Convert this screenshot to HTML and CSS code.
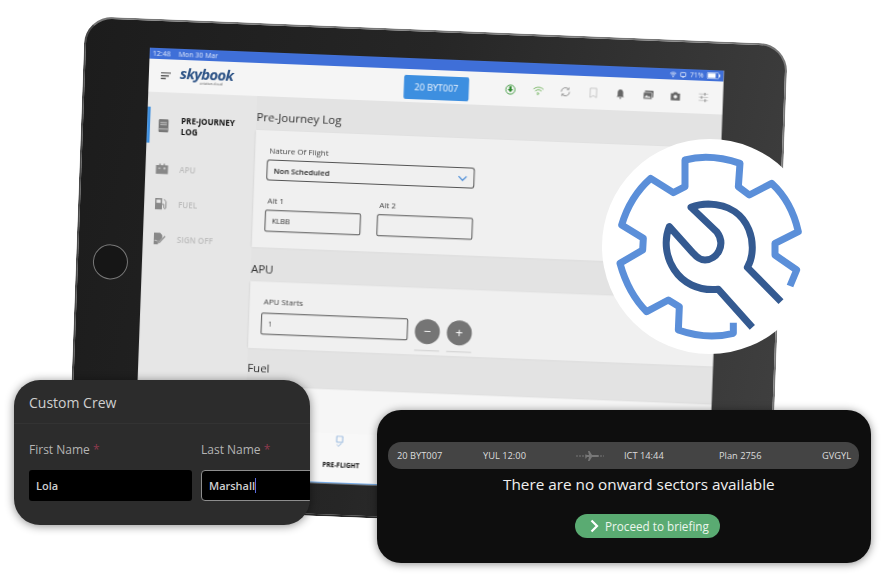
FILE: index.html
```html
<!DOCTYPE html>
<html lang="en">
<head>
<meta charset="utf-8">
<title>Skybook</title>
<link rel="stylesheet" href="styles.css">
</head>
<body>
<main class="stage">
  <section class="tablet">
    <div class="bezel"><span class="home"></span></div>
    <div class="screen">
      <div class="status">
        <span class="st-time">12:48</span><span>Mon 30 Mar</span>
        <span class="st-right">
          <svg class="st-ico" viewBox="0 0 12 10"><path d="M.5 3.500C3.500.5 8.500.5 11.500 3.500M2.500 5.500c2-2 5-2 7 0" fill="none" stroke="#fff" stroke-width="1.300"/><path d="M4.500 7.500c1-1 2-1 3 0L6 9.500z" fill="#fff"/></svg>
          <svg class="st-ico" viewBox="0 0 12 10"><rect x="1.500" y="1" width="9" height="6.500" rx="1" fill="none" stroke="#fff" stroke-width="1.200"/><path d="M4 9h4" stroke="#fff"/></svg>
          <span>71%</span>
          <svg class="st-batt" viewBox="0 0 18 9"><rect x=".5" y=".5" width="15" height="8" rx="1.500" fill="none" stroke="#fff" opacity=".7"/><rect x="1.500" y="1.500" width="10" height="6" fill="#fff"/><rect x="16" y="3" width="1.500" height="3" fill="#fff"/></svg>
        </span>
      </div>
      <header class="topbar">
        <svg class="burger" viewBox="0 0 10 7"><path d="M0 .7h10M0 3.500h8M0 6.300h5" stroke="#444" stroke-width="1.200"/></svg>
        <div class="logo"><span class="logo-main">skybook</span><span class="logo-sub">aviation.cloud</span></div>
        <div class="flight-btn">20 BYT007</div>
        <div class="tools">
          <svg class="tool" viewBox="0 0 12 12"><circle cx="6" cy="6" r="5" fill="none" stroke="#3c9a3c" stroke-width="1"/><path d="M4.700 2.500h2.600v3h1.700L6 9 3 5.500h1.700z" fill="#2f8a2f"/></svg>
          <svg class="tool" viewBox="0 0 12 12"><path d="M.5 4.500C3.500 1.500 8.500 1.500 11.500 4.500M2.500 6.500c2-2 5-2 7 0" fill="none" stroke="#6fb25a" stroke-width="1"/><path d="M5 8l2 1.200-2 1.300z" fill="none" stroke="#6fb25a" stroke-width=".8"/></svg>
          <svg class="tool" viewBox="0 0 12 12"><path d="M1.500 6a4.500 4.500 0 0 1 7.800-3M10.500 6a4.500 4.500 0 0 1-7.800 3" fill="none" stroke="#8a8a8a" stroke-width="1"/><path d="M9.800 1v2.500H7.300M2.200 11V8.500h2.500" fill="none" stroke="#8a8a8a" stroke-width=".8"/></svg>
          <svg class="tool" viewBox="0 0 12 12"><path d="M2.500 1h7v10L6 9l-3.500 2z" fill="none" stroke="#c4c4c4" stroke-width="1"/></svg>
          <svg class="tool" viewBox="0 0 12 12"><path d="M6 1c-2 0-3 1.500-3 3.500V8L2 9.300h8L9 8V4.500C9 2.500 8 1 6 1zM5 10h2v1H5z" fill="#666"/></svg>
          <svg class="tool" viewBox="0 0 12 12"><rect x="2" y="1" width="9.500" height="7.500" rx="1" fill="#666"/><rect x=".5" y="3" width="9.500" height="7.500" rx="1" fill="#666" stroke="#f5f5f5" stroke-width=".7"/><path d="M1.500 9l2.500-3 2 2 1-1 2 2z" fill="#eee"/></svg>
          <svg class="tool" viewBox="0 0 12 12"><path d="M1 3h2.500l1-1.500h3l1 1.500H11v7.500H1z" fill="#666"/><circle cx="6" cy="6.500" r="2" fill="#f5f5f5"/></svg>
          <svg class="tool" viewBox="0 0 12 12"><path d="M1 2.500h10M1 6h10M1 9.500h10" stroke="#bdbdbd" stroke-width=".9"/><path d="M7.500 1v3M4 4.500v3M8 8v3" stroke="#8f8f8f" stroke-width="1.200"/></svg>
        </div>
      </header>
      <div class="main">
        <nav class="side">
          <a class="nav active">
            <svg class="nav-ico" viewBox="0 0 14 16"><path d="M2.500 0h9A1.500 1.500 0 0 1 13 1.500v13a1.500 1.500 0 0 1-1.500 1.500h-9A1.500 1.500 0 0 1 1 14.500v-13A1.500 1.500 0 0 1 2.500 0z" fill="#777"/><path d="M3 4h8M3 6.500h8M1.500 12h11" stroke="#ddd" stroke-width=".9"/></svg>
            <span class="nav-txt">PRE-JOURNEY LOG</span>
          </a>
          <a class="nav">
            <svg class="nav-ico" viewBox="0 0 14 14"><path d="M1 3h3V1.500h1.500V3h3V1.500H10V3h3.500v9.500H.5V3z" fill="#888"/><path d="M3 6.500h2.500M8.500 6.500H11M9.750 5.250v2.500" stroke="#e8e8e8" stroke-width=".8"/></svg>
            <span class="nav-txt">APU</span>
          </a>
          <a class="nav">
            <svg class="nav-ico" viewBox="0 0 14 14"><path d="M1 1h7.500v12H1z" fill="#888"/><rect x="2.500" y="2.500" width="4.500" height="3.500" fill="#e8e8e8"/><path d="M8.500 7.500h2v3.500c0 1.500 2.200 1.500 2.200 0V4.500L10.500 2" fill="none" stroke="#888" stroke-width="1"/></svg>
            <span class="nav-txt">FUEL</span>
          </a>
          <a class="nav">
            <svg class="nav-ico" viewBox="0 0 14 14"><path d="M1 .5h6.500L10 3v3l-4 4.500-.5 2.500H1z" fill="#888"/><path d="M6.500 10.500 12.500 3.500l1 1-6 7-2 .5z" fill="#888"/><path d="M2 9.500c1-2 1.500-1 2 0s1-.5 1.500-.5" fill="none" stroke="#e8e8e8" stroke-width=".7"/></svg>
            <span class="nav-txt">SIGN OFF</span>
          </a>
        </nav>
        <div class="content">
          <h2 class="sec-title first">Pre-Journey Log</h2>
          <div class="card card-log">
            <div class="lbl">Nature Of Flight</div>
            <div class="select"><span>Non Scheduled</span>
              <svg class="chev" viewBox="0 0 10 6"><path d="M1 1l4 4 4-4" fill="none" stroke="#3f86d6" stroke-width="1.200"/></svg>
            </div>
            <div class="alts">
              <div class="alt"><div class="lbl">Alt 1</div><div class="input">KLBB</div></div>
              <div class="alt"><div class="lbl">Alt 2</div><div class="input"></div></div>
            </div>
          </div>
          <h2 class="sec-title">APU</h2>
          <div class="card card-apu">
            <div class="lbl">APU Starts</div>
            <div class="apu-row">
              <div class="input input-wide">1</div>
              <div class="step"><span class="step-btn">−</span></div>
              <div class="step"><span class="step-btn">+</span></div>
            </div>
          </div>
          <h2 class="sec-title fuel">Fuel</h2>
          <div class="card card-fuel"></div>
        </div>
      </div>
      <footer class="tabs">
        <div class="tab">
          <svg class="tab-ico" viewBox="0 0 10 12"><rect x="2" y=".5" width="6" height="6" fill="none" stroke="#7fa8d8" stroke-width=".8"/><path d="M2.500 9l1.500 1.500 3-3" fill="none" stroke="#7fa8d8" stroke-width=".8"/></svg>
          <span>PRE-FLIGHT</span>
        </div>
      </footer>
    </div>
  </section>

  <aside class="badge">
    <svg class="badge-ico" viewBox="0 0 720 690">
      <path class="gear" d="M600 468 620 420 555 375V340L625 305Q605 215 545 160L478 195 445 170 450 100Q360 70 285 90V170L250 188 182 145Q120 200 95 285L160 325 158 360 90 400Q115 490 170 545L235 510 268 530 265 600Q350 630 430 610V578"/>
      <path class="wrench" d="M573 515 472 412C505 360 490 225 355 222 335 222 320 225 303 232L380 305C410 345 380 390 345 390 330 390 320 382 310 370L238 290C205 370 260 490 385 478L487 592"/>
    </svg>
  </aside>

  <section class="crew">
    <h3 class="crew-title">Custom Crew</h3>
    <div class="crew-form">
      <div><div class="crew-lbl">First Name <em>*</em></div><div class="crew-input">Lola</div></div>
      <div><div class="crew-lbl">Last Name <em>*</em></div><div class="crew-input focus">Marshal<span class="caret">l</span></div></div>
    </div>
  </section>

  <section class="flight">
    <div class="bar">
      <span>20 BYT007</span>
      <span>YUL 12:00</span>
      <svg class="plane" viewBox="0 0 30 12"><path d="M0 6h8M9 6h19" stroke="#777" stroke-width="1" stroke-dasharray="2 1"/><path d="M12 1h1.500l2.500 4h6l1 1-1 1h-6l-2.500 4H12l1-4H11l-1 1.500H9.200L9.600 6 9.200 4.500H10l1 .5h2z" fill="#777"/></svg>
      <span>ICT 14:44</span>
      <span>Plan 2756</span>
      <span>GVGYL</span>
    </div>
    <p class="msg">There are no onward sectors available</p>
    <div class="proceed">
      <svg class="proceed-ico" viewBox="0 0 9 14"><path d="M1.500 1.500 7 7l-5.500 5.500" fill="none" stroke="#fff" stroke-width="2.200"/></svg>
      <span>Proceed to briefing</span>
    </div>
  </section>
</main>
</body>
</html>
```
FILE: styles.css
```css
* { box-sizing: border-box; }
html, body { margin: 0; padding: 0; background: #fff; }
body { font-family: "Open Sans", "Liberation Sans", sans-serif; }
.stage { position: relative; width: 888px; height: 577px; overflow: hidden; }

/* tablet: a photographed object on a free canvas */
.tablet {
  position: absolute; left: 85px; top: 16px;
  width: 703px; height: 490px;
  display: flex;
  padding: 29px 61px 31px 0;
  border: 2px solid;
  border-color: #777 #7a7a7a #2a2a2a #4a4a4a;
  border-radius: 28px;
  background: linear-gradient(100deg, #1c1c1c 0%, #262626 45%, #404040 100%);
  transform-origin: 0 0;
  transform: matrix(1, .04, -.037, 1, 0, 0);
}
.bezel { width: 64px; flex: none; display: flex; align-items: center; padding-left: 15px; }
.home { width: 35px; height: 35px; border-radius: 50%; border: 1.5px solid #777; background: #161616; }
.screen {
  flex: 1; min-width: 0; margin-top: -2px;
  display: flex; flex-direction: column;
  background: #e6e6e6; overflow: hidden; filter: blur(.3px);
}

.status {
  height: 11px; flex: none; background: #3f6fd8; color: #dfe8fb;
  font-size: 7px; line-height: 11px; padding: 0 3px; display: flex; align-items: center;
}
.st-time { margin-right: 8px; }
.st-right { margin-left: auto; display: flex; align-items: center; gap: 3px; }
.st-ico { width: 7px; height: 6px; }
.st-batt { width: 14px; height: 7px; }

.topbar {
  height: 33px; flex: none; background: #f5f5f5; display: flex; align-items: center; padding-left: 12px;
}
.burger { width: 10px; height: 7px; margin-right: 9px; flex: none; }
.logo { width: 57px; flex: none; display: flex; flex-direction: column; align-items: flex-start; margin-top: -3px; }
.logo-main { font-size: 15px; line-height: 15px; font-weight: 700; font-style: italic; letter-spacing: -.75px; color: #2e5487; }
.logo-sub { font-size: 3.500px; line-height: 4px; color: #555; margin-left: 20px; }
.flight-btn {
  width: 65px; height: 24px; margin-left: 167px; margin-top: 3px; flex: none;
  background: #3d8fe0; border-radius: 2px; color: #f2f7fd; font-size: 9px; line-height: 24px; text-align: center;
}
.tools { display: flex; gap: 16.500px; margin-left: 36px; }
.tool { width: 11px; height: 11px; display: block; }

.main { flex: 1; min-height: 0; display: flex; overflow: hidden; }
.side { width: 109px; flex: none; padding-top: 15px; display: flex; flex-direction: column; }
.nav { height: 35px; display: flex; align-items: center; padding-left: 10px; gap: 11px; color: #bdbdbd; font-size: 8px; font-weight: 600; }
.nav.active { height: 36px; margin-bottom: 8px; border-left: 3px solid #3d8fe0; padding-left: 7px; color: #111; font-weight: 700; }
.nav-ico { width: 13px; height: 13px; flex: none; }
.nav-txt { width: 64px; line-height: 11px; }

.content { flex: 1; min-width: 0; padding-top: 13px; background: #e3e3e3; }
.sec-title { margin: 14px 0 4px; font-size: 11.500px; line-height: 16px; font-weight: 400; color: #333; }
.sec-title.first { margin-top: 0; margin-bottom: 5px; }
.sec-title.fuel { margin: 12px 0 10px; }
.card { background: #f0f0f0; padding: 14px 12px 0; box-shadow: 0 1px 2px rgba(0,0,0,.12); }
.card-log { height: 117px; }
.card-apu { height: 67px; padding-top: 14px; }
.card-fuel { height: 60px; background: #f6f6f6; }
.lbl { font-size: 8px; line-height: 12px; color: #444; padding-left: 2px; }
.select {
  margin-top: 3px; width: 208px; height: 21px; border: 1px solid #555; border-radius: 3px;
  display: flex; align-items: center; justify-content: space-between; padding: 0 6px;
  font-size: 7.700px; font-weight: 600; color: #222;
}
.chev { width: 10px; height: 6px; }
.alts { display: flex; gap: 16px; margin-top: 14px; }
.alt { width: 96px; }
.alt .lbl { margin-bottom: 3px; }
.input { height: 22px; border: 1px solid #555; border-radius: 2px; padding: 0 6px; font-size: 7.500px; line-height: 20px; color: #333; }
.apu-row { display: flex; margin-top: 5px; gap: 7px; align-items: flex-start; }
.input-wide { width: 147px; color: #555; }
.step { width: 25px; padding-bottom: 6px; border-bottom: 1px solid #cfcfcf; }
.step-btn { display: block; width: 25px; height: 25px; border-radius: 50%; background: #757575; color: #fff; font-size: 13px; line-height: 24px; text-align: center; }

.tabs { height: 50px; flex: none; background: #f8f8f8; border-bottom: 1.5px solid #4a90e0; padding-left: 186px; margin-top: -50px; position: relative; }
.tab { width: 40px; display: flex; flex-direction: column; align-items: center; padding-top: 2px; font-size: 6.500px; font-weight: 700; color: #111; white-space: nowrap; }
.tab-ico { width: 10px; height: 12px; margin-bottom: 13px; margin-right: 4px; }

/* floating overlays */
.badge { position: absolute; left: 602px; top: 139px; width: 215px; height: 215px; border-radius: 50%; background: #fff; }
.badge-ico { position: absolute; left: -12px; top: -9px; width: 240px; height: 230px; }
.gear, .wrench { fill: none; stroke-width: 21; stroke-linejoin: round; }
.gear { stroke: #5b8fd9; }
.wrench { stroke: #345a91; }

.crew {
  position: absolute; left: 14px; top: 380px; width: 296px; height: 145px;
  border-radius: 26px; background: #2c2c2c; overflow: hidden;
  box-shadow: 0 1px 10px rgba(0,0,0,.45); color: #c4c4c4;
}
.crew-title { margin: 0; height: 44px; padding-left: 15px; border-bottom: 1px solid #333; font-size: 14px; line-height: 46px; font-weight: 400; color: #cfcfcf; }
.crew-form { display: grid; grid-template-columns: 163px 140px; gap: 9px; padding: 18px 0 0 15px; }
.crew-lbl { font-size: 12px; line-height: 16px; color: #b4b4b4; margin-bottom: 12px; white-space: nowrap; }
.crew-lbl em { font-style: normal; color: #8e3a4c; }
.crew-input { height: 31px; background: #000; border-radius: 3px; padding: 0 7px; font-size: 11px; line-height: 31px; font-weight: 600; color: #cfcfcf; }
.crew-input.focus { border: 1px solid #8d8d8d; line-height: 29px; border-radius: 4px; }
.caret { border-right: 1px solid #5a6ae0; }

.flight {
  position: absolute; left: 377px; top: 410px; width: 494px; height: 153px;
  border-radius: 24px; background: #0e0e0e; padding-top: 32px;
  display: flex; flex-direction: column; align-items: flex-start;
  box-shadow: 0 1px 9px rgba(0,0,0,.45); color: #e0e0e0;
}
.bar {
  margin-left: 11px; width: 471px; height: 27px; border-radius: 13px; background: #444;
  padding-left: 9px; display: grid; grid-template-columns: 86px 93px 48px 95px 103px auto; align-items: center;
  font-size: 9.300px; color: #ddd;
}
.plane { width: 30px; height: 12px; }
.msg { margin: 5px 0 0 126px; font-size: 15.300px; line-height: 20px; color: #f0f0f0; white-space: nowrap; }
.proceed {
  margin: 20px 0 0 198px; width: 145px; height: 24px; border-radius: 12px; background: #5aab72;
  display: flex; align-items: center; padding-left: 15px; gap: 6px;
  font-size: 11.700px; color: #ecf6ee;
}
.proceed-ico { width: 9px; height: 14px; flex: none; }
```
